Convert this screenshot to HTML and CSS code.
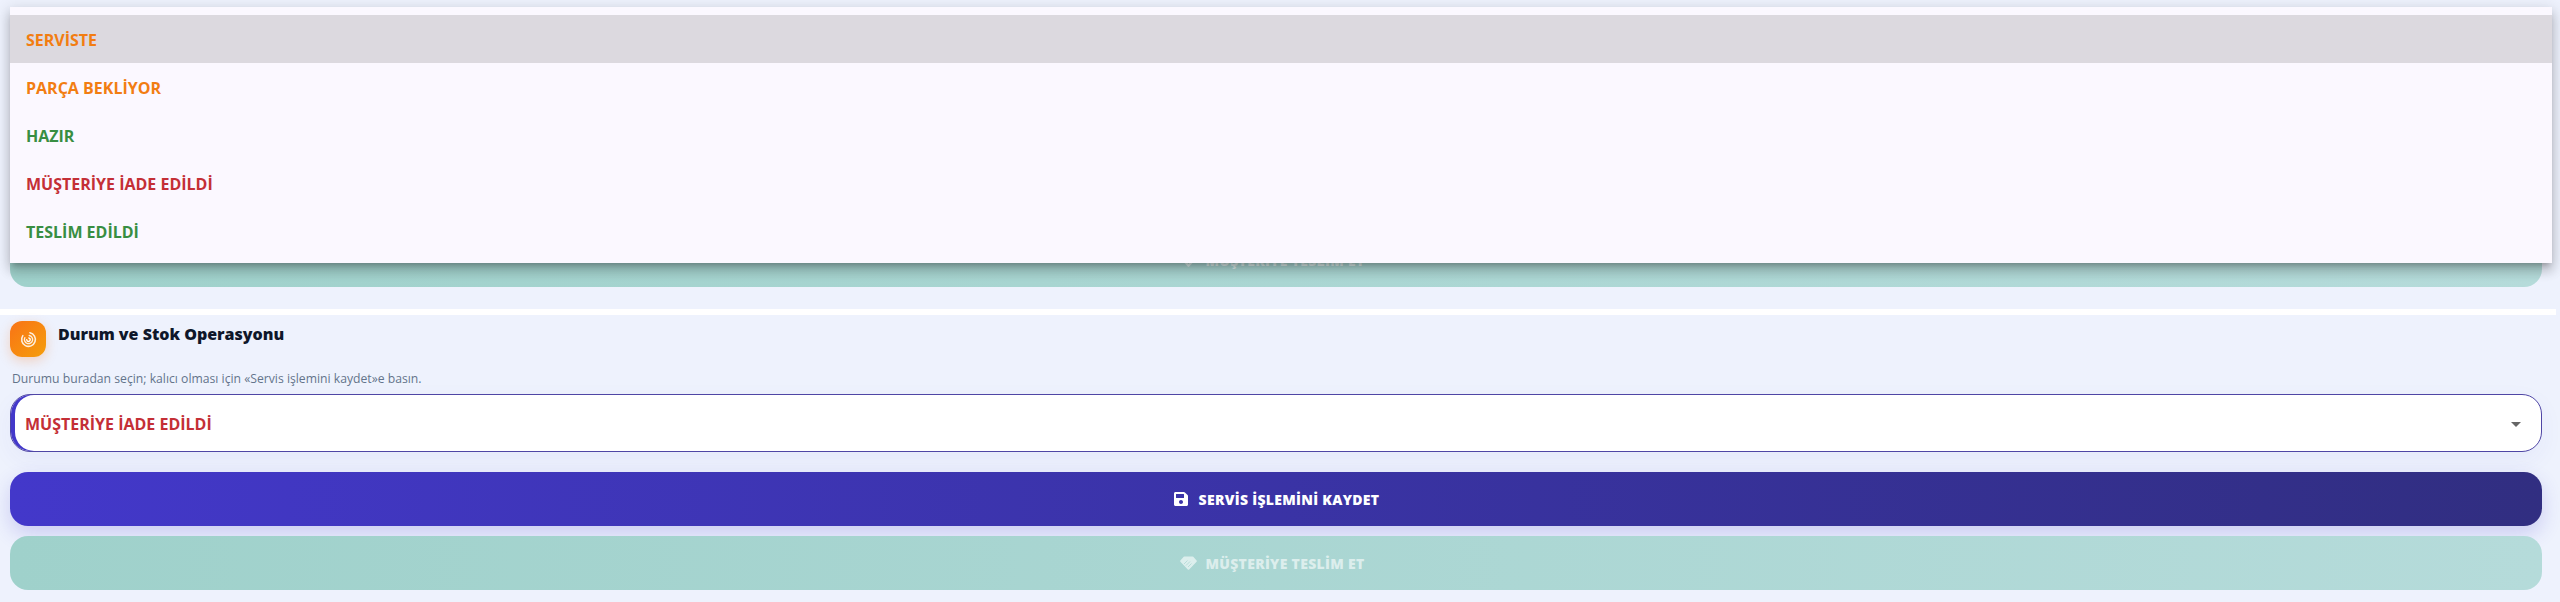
FILE: index.html
```html
<!DOCTYPE html>
<html lang="tr">
<head>
  <meta charset="UTF-8">
  <meta name="viewport" content="width=device-width, initial-scale=1.0">
  <title>Durum ve Stok Operasyonu</title>
  <link rel="stylesheet" href="styles.css">
</head>
<body>
  <div class="page">
    <!-- ustteki form, sadece alt butonu listenin altindan gorunuyor -->
    <section class="panel panel-covered">
      <button class="action action-deliver" disabled>
        <svg class="action-icon icon-wide" viewBox="0 0 17 14"><path d="M4.500.5h8a1 1 0 0 1 .8.3l3.300 3.600a1 1 0 0 1 0 1.300L9.200 13.400a1 1 0 0 1-1.400 0L.4 5.700a1 1 0 0 1 0-1.300L3.700.8a1 1 0 0 1 .8-.3z"/><path class="icon-cut" d="M6 9.500l4-4M8 11l3.500-3.500M4 8l3.500-3.500"/></svg>
        MÜŞTERİYE TESLİM ET
      </button>
    </section>

    <section class="panel">
      <div class="panel-head">
        <span class="panel-icon">
          <svg viewBox="0 0 24 24" fill="none" stroke="#fff" stroke-linecap="round">
            <path d="M14 2.500A9.700 9.700 0 1 1 4 6.500" stroke-width="2.200" opacity=".85"/>
            <path d="M13 6.300A5.800 5.800 0 1 1 6.800 9.500" stroke-width="2" opacity=".85"/>
            <path d="M12.500 9.800a2.500 2.500 0 1 1-3 2.500" stroke-width="2"/>
          </svg>
        </span>
        <h2>Durum ve Stok Operasyonu</h2>
      </div>
      <p class="hint">Durumu buradan seçin; kalıcı olması için «Servis işlemini kaydet»e basın.</p>
      <div class="status-select">
        <span class="status-value red">MÜŞTERİYE İADE EDİLDİ</span>
        <span class="caret"></span>
      </div>
      <button class="action action-save">
        <svg class="action-icon" viewBox="0 0 448 512"><path d="M433.941 129.941l-83.882-83.882A48 48 0 0 0 316.118 32H48C21.49 32 0 53.49 0 80v352c0 26.51 21.49 48 48 48h352c26.51 0 48-21.49 48-48V163.882a48 48 0 0 0-14.059-33.941zM224 416c-35.346 0-64-28.654-64-64 0-35.346 28.654-64 64-64s64 28.654 64 64c0 35.346-28.654 64-64 64zm96-304.52V212c0 6.627-5.373 12-12 12H76c-6.627 0-12-5.373-12-12V108c0-6.627 5.373-12 12-12h228.52c3.183 0 6.235 1.264 8.485 3.515l3.48 3.48A11.996 11.996 0 0 1 320 111.48z"/></svg>
        SERVİS İŞLEMİNİ KAYDET
      </button>
      <button class="action action-deliver" disabled>
        <svg class="action-icon icon-wide" viewBox="0 0 17 14"><path d="M4.500.5h8a1 1 0 0 1 .8.3l3.300 3.600a1 1 0 0 1 0 1.300L9.200 13.400a1 1 0 0 1-1.400 0L.4 5.700a1 1 0 0 1 0-1.300L3.700.8a1 1 0 0 1 .8-.3z"/><path class="icon-cut" d="M6 9.500l4-4M8 11l3.500-3.500M4 8l3.500-3.500"/></svg>
        MÜŞTERİYE TESLİM ET
      </button>
    </section>
  </div>

  <ul class="menu">
    <li class="menu-item active orange">SERVİSTE</li>
    <li class="menu-item orange">PARÇA BEKLİYOR</li>
    <li class="menu-item green">HAZIR</li>
    <li class="menu-item red">MÜŞTERİYE İADE EDİLDİ</li>
    <li class="menu-item green">TESLİM EDİLDİ</li>
  </ul>
</body>
</html>
```

FILE: styles.css
```css
html, body {
  margin: 0;
  height: 602px;
  overflow: hidden;
}

body {
  font-family: "Open Sans", "Noto Sans", sans-serif;
  background: #eef2fd;
}

.page {
  padding-top: 12px;
  padding-right: 4px;
}

.panel {
  height: 269px;
  padding: 6px 14px 22px 10px;
  background: #eef2fd;
}

.panel-covered {
  display: flex;
  align-items: flex-end;
  margin-bottom: 6px;
  box-shadow: 0 6px 0 #fff;
}

.panel-head {
  display: flex;
  gap: 12px;
  height: 36px;
}

.panel-head h2 {
  margin: 0;
  font-size: 16px;
  line-height: 26px;
  font-weight: 800;
  color: #0f172a;
}

.panel-icon {
  width: 36px;
  height: 36px;
  flex: none;
  display: flex;
  align-items: center;
  justify-content: center;
  border-radius: 12px;
  background: linear-gradient(135deg, #f97316, #f59e0b);
  box-shadow: 0 4px 12px rgba(249, 115, 22, 0.25);
}

.panel-icon svg {
  width: 17px;
  height: 17px;
}

.hint {
  margin: 12px 0 0 2px;
  height: 25px;
  font-size: 12.2px;
  line-height: 20px;
  font-weight: 500;
  color: #64748b;
}

.status-select {
  height: 58px;
  box-sizing: border-box;
  display: flex;
  align-items: center;
  justify-content: space-between;
  padding: 2px 20px 0 14px;
  border: 1.5px solid #4f46a5;
  border-radius: 20px;
  background: #fff;
  box-shadow: inset 4px 0 0 #4338ca, 0 8px 24px rgba(67, 56, 202, 0.05);
}

.status-value {
  font-size: 16px;
  font-weight: 700;
}

.caret {
  width: 0;
  height: 0;
  border-left: 5px solid transparent;
  border-right: 5px solid transparent;
  border-top: 5px solid #666;
}

.orange { color: #f27d12; }
.green { color: #388e42; }
.red { color: #c42f36; }

.action {
  display: flex;
  align-items: center;
  justify-content: center;
  gap: 10px;
  width: 100%;
  height: 54px;
  padding: 0;
  border: 0;
  border-radius: 18px;
  font-family: inherit;
  font-size: 14px;
  font-weight: 800;
  letter-spacing: 0.3px;
  color: #fff;
}

.action-icon {
  width: 16px;
  height: 16px;
  fill: currentColor;
}

.icon-wide {
  width: 17px;
  height: 14px;
}

.icon-cut {
  fill: none;
  stroke: #a9d6d0;
  stroke-width: 0.7;
}

.action-save {
  margin-top: 20px;
  background: linear-gradient(90deg, #4338ca, #312e81);
  box-shadow: 0 8px 20px rgba(67, 56, 202, 0.2);
}

.action-deliver {
  margin-top: 10px;
  padding-right: 7px;
  gap: 8px;
  background: linear-gradient(90deg, #9fd1cb, #b5dbda);
  color: rgba(255, 255, 255, 0.6);
}

/* acilir liste, formun ustune biniyor */
.menu {
  position: absolute;
  top: 7px;
  left: 10px;
  width: 2542px;
  margin: 0;
  padding: 8px 0;
  list-style: none;
  background: #fbf8ff;
  box-shadow: 0 5px 5px -3px rgba(0, 0, 0, 0.2), 0 8px 10px 1px rgba(0, 0, 0, 0.14), 0 3px 14px 2px rgba(0, 0, 0, 0.12);
}

.menu-item {
  height: 48px;
  padding: 0 16px;
  font-size: 16px;
  line-height: 50px;
  font-weight: 700;
}

.menu-item.active {
  background: #dcd9df;
}
```
